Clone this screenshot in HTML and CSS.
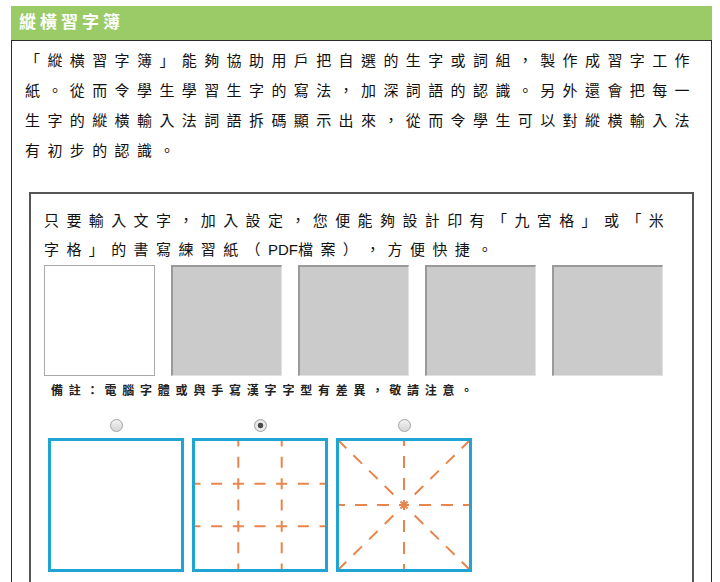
FILE: index.html
```html
<!DOCTYPE html>
<html lang="zh-Hant">
<head>
<meta charset="utf-8">
<title>縱橫習字簿</title>
<link rel="stylesheet" href="styles.css">
</head>
<body>
<div class="page">
  <h1 class="header">縱橫習字簿</h1>
  <div class="panel">
    <p class="intro">「縱橫習字簿」能夠協助用戶把自選的生字或詞組，製作成習字工作紙。從而令學生學習生字的寫法，加深詞語的認識。另外還會把每一生字的縱橫輸入法詞語拆碼顯示出來，從而令學生可以對縱橫輸入法有初步的認識。</p>
    <div class="tool">
      <p class="lead">只要輸入文字，加入設定，您便能夠設計印有「九宮格」或「米字格」的書寫練習紙（<span class="latin">PDF</span>檔案），方便快捷。</p>
      <div class="previews">
        <div class="cell cell-blank"></div>
        <div class="cell cell-empty"></div>
        <div class="cell cell-empty"></div>
        <div class="cell cell-empty"></div>
        <div class="cell cell-empty"></div>
      </div>
      <p class="note">備註：電腦字體或與手寫漢字字型有差異，敬請注意。</p>
      <div class="grids">
        <label class="grid-option">
          <input class="radio" type="radio" name="grid" value="blank">
          <svg class="grid" width="136" height="134" viewBox="0 0 136 134">
            <rect class="frame" x="1.5" y="1.5" width="133" height="131"/>
          </svg>
        </label>
        <label class="grid-option">
          <input class="radio" type="radio" name="grid" value="nine" checked>
          <svg class="grid" width="136" height="134" viewBox="0 0 136 134">
            <line class="guide guide-v" x1="46.3" y1="3" x2="46.3" y2="131"/>
            <line class="guide guide-v" x1="89.7" y1="3" x2="89.7" y2="131"/>
            <line class="guide guide-h" x1="3" y1="45.7" x2="133" y2="45.7"/>
            <line class="guide guide-h" x1="3" y1="88.3" x2="133" y2="88.3"/>
            <rect class="frame" x="1.5" y="1.5" width="133" height="131"/>
          </svg>
        </label>
        <label class="grid-option">
          <input class="radio" type="radio" name="grid" value="rice">
          <svg class="grid" width="136" height="134" viewBox="0 0 136 134">
            <line class="guide guide-r" x1="68" y1="67" x2="68" y2="3"/>
            <line class="guide guide-r" x1="68" y1="67" x2="68" y2="131"/>
            <line class="guide guide-r" x1="68" y1="67" x2="3" y2="67"/>
            <line class="guide guide-r" x1="68" y1="67" x2="133" y2="67"/>
            <line class="guide guide-r" x1="68" y1="67" x2="3" y2="3"/>
            <line class="guide guide-r" x1="68" y1="67" x2="133" y2="3"/>
            <line class="guide guide-r" x1="68" y1="67" x2="3" y2="131"/>
            <line class="guide guide-r" x1="68" y1="67" x2="133" y2="131"/>
            <rect class="frame" x="1.5" y="1.5" width="133" height="131"/>
          </svg>
        </label>
      </div>
    </div>
  </div>
</div>
</body>
</html>
```

FILE: styles.css
```css
body {
  margin: 0;
  background: #ffffff;
  color: #111111;
  font-family: "Liberation Sans", "Noto Sans CJK TC", sans-serif;
  text-spacing-trim: space-all;
}

.page {
  width: 701px;
  margin: 6px 0 0 11px;
}

.header {
  margin: 0;
  height: 34px;
  line-height: 34px;
  padding-left: 8px;
  background: #9acb67;
  color: #ffffff;
  font-size: 17px;
  font-weight: 700;
  letter-spacing: 4px;
}

.panel {
  box-sizing: border-box;
  width: 701px;
  border: 1px solid #2a2a2a;
  border-bottom: none;
  padding: 5px 6px 40px 13px;
}

.intro {
  margin: 0;
  font-size: 15px;
  line-height: 30px;
  letter-spacing: 7.4px;
}

.tool {
  box-sizing: border-box;
  width: 665px;
  margin: 26px 0 0 4px;
  border: 2px solid #555555;
  padding: 12px 14px 40px 13px;
}

.lead {
  margin: 0;
  font-size: 15px;
  line-height: 29px;
  letter-spacing: 7.4px;
}

.latin {
  letter-spacing: 0;
}

.previews {
  display: flex;
  gap: 16px;
  margin-top: 1px;
}

.cell {
  box-sizing: border-box;
  width: 111px;
  height: 111px;
}

.cell-blank {
  background: #ffffff;
  border: 1px solid #aaaaaa;
}

.cell-empty {
  background: #cbcbcb;
  border-top: 2px solid #9a9a9a;
  border-left: 2px solid #9a9a9a;
  border-right: 1px solid #e2e2e2;
  border-bottom: 1px solid #e2e2e2;
}

.note {
  margin: 5px 0 0 7px;
  font-size: 12px;
  line-height: 20px;
  letter-spacing: 5.8px;
  font-weight: 700;
  color: #222222;
}

.grids {
  display: flex;
  gap: 8px;
  margin: 18px 0 0 4px;
}

.grid-option {
  display: flex;
  flex-direction: column;
  align-items: center;
  gap: 6px;
  cursor: pointer;
}

.radio {
  appearance: none;
  -webkit-appearance: none;
  box-sizing: border-box;
  width: 13px;
  height: 13px;
  margin: 0;
  border-radius: 50%;
  border: 1px solid #a2a2a2;
  background: linear-gradient(#f2f2f2, #d6d6d6);
}

.radio:checked {
  background: radial-gradient(circle, #4a4a4a 0, #4a4a4a 2.5px, #f0f0f0 3.2px, #dcdcdc 6px);
}

.grid {
  display: block;
}

.frame {
  fill: none;
  stroke: #1ea5d3;
  stroke-width: 3;
}

.guide {
  stroke: #e9854c;
  stroke-width: 2;
  fill: none;
}

.guide-v {
  stroke-dasharray: 11 10.33;
  stroke-dashoffset: 5.5;
}

.guide-h {
  stroke-dasharray: 11 10.67;
  stroke-dashoffset: 5.5;
}

.guide-r {
  stroke-dasharray: 12 10;
  stroke-dashoffset: 7;
}
```
